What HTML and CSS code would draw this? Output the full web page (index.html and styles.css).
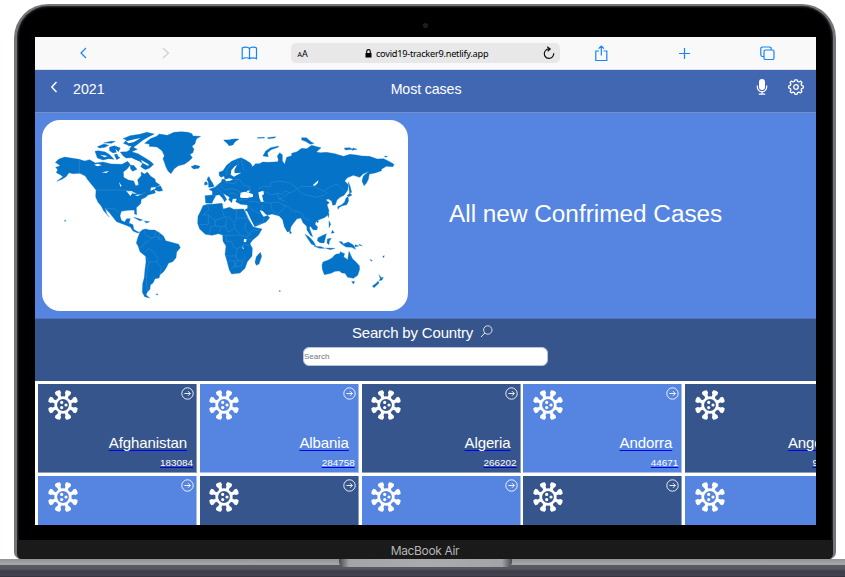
FILE: index.html
```html
<!DOCTYPE html>
<html lang="en">
<head>
<meta charset="utf-8">
<title>Covid-19 Tracker</title>
<link rel="stylesheet" href="styles.css">
</head>
<body>
<svg class="defs" width="0" height="0" aria-hidden="true">
  <defs>
    <path id="spike" d="M-1.700-7V-10.500L-3-12.300-2.700-14.800Q0-16 2.700-14.800L3-12.300 1.700-10.500V-7Z" fill="#fff"/>
    <symbol id="virus" viewBox="-16 -16 32 32">
      <circle r="7.300" fill="none" stroke="#fff" stroke-width="2.700"/>
      <use href="#spike" transform="rotate(22.5)"/><use href="#spike" transform="rotate(67.5)"/>
      <use href="#spike" transform="rotate(112.5)"/><use href="#spike" transform="rotate(157.5)"/>
      <use href="#spike" transform="rotate(202.5)"/><use href="#spike" transform="rotate(247.5)"/>
      <use href="#spike" transform="rotate(292.5)"/><use href="#spike" transform="rotate(337.5)"/>
      <g fill="#fff"><circle cx="-1.3" cy="-2.6" r="1.6"/><circle cx="-1.3" cy="2.6" r="1.6"/><circle cx="3" cy="0" r="1.6"/></g>
    </symbol>
    <symbol id="go" viewBox="0 0 13 13">
      <g fill="none" stroke="#fff" stroke-width=".9"><circle cx="6.5" cy="6.5" r="5.7"/><path d="M3.4 6.5H9.3M7 4.2 9.3 6.5 7 8.8"/></g>
    </symbol>
  </defs>
</svg>
<div class="laptop">
  <div class="lid">
    <div class="camera-row"><span class="camera"></span></div>
    <div class="screen">
      <nav class="toolbar">
        <svg class="tool" width="18" height="18" viewBox="0 0 18 18"><path d="M12 4 7 9 12 14"/></svg>
        <svg class="tool off" width="18" height="18" viewBox="0 0 18 18"><path d="M6 4 11.500 9 6 14"/></svg>
        <svg class="tool" width="18" height="18" viewBox="0 0 18 18"><path d="M9.500 4.500C8 2.800 4 2.700 2.200 4V14.800C4.500 13.600 8 13.600 9.500 14.800 11 13.600 14.500 13.600 16.500 14.800V4C14.500 2.700 11 2.800 9.500 4.500V14.500"/></svg>
        <div class="address">
          <span class="text-size"><small>A</small>A</span>
          <span class="url"><svg width="7" height="9" viewBox="0 0 7 9"><path d="M.5 4H6.500V8.500H.500Z" fill="#000"/><path d="M1.700 4V2.400A1.800 1.800 0 0 1 5.300 2.400V4" fill="none" stroke="#000" stroke-width="1.100"/></svg><span>covid19-tracker9.netlify.app</span></span>
          <svg class="reload" width="14" height="14" viewBox="0 0 14 14"><path d="M8.500 3A4.700 4.700 0 1 0 12.700 7.300M6.200 .8 9.200 3 6.600 5.400" fill="none" stroke="#111" stroke-width="1.200"/></svg>
        </div>
        <svg class="tool" width="18" height="18" viewBox="0 0 18 18"><path d="M7 7H3.800V16.500H14.800V7H11.500M9.300 11.500V2.200M6.600 4.700 9.300 2 12 4.700"/></svg>
        <svg class="tool" width="18" height="18" viewBox="0 0 18 18"><path d="M9.500 4V15M4 9.500H15"/></svg>
        <svg class="tool" width="18" height="18" viewBox="0 0 18 18"><rect x="6" y="6" width="10" height="9.500" rx="1.600"/><path d="M6 12.500H4.500A1.700 1.700 0 0 1 2.800 10.800V4.700A1.700 1.700 0 0 1 4.500 3H11.500A1.700 1.700 0 0 1 13.200 4.700V6"/></svg>
      </nav>
      <header class="header">
        <div class="left">
          <svg width="8" height="12" viewBox="0 0 8 12"><path d="M6.500 1 1.800 6 6.500 11" fill="none" stroke="#fff" stroke-width="1.500"/></svg>
          <span>2021</span>
        </div>
        <h1>Most cases</h1>
        <div class="right">
          <svg width="12" height="16" viewBox="0 0 12 16"><rect x="3" y="0" width="6" height="11" rx="3" fill="#fff"/><path d="M1.300 6.500V8A4.700 4.700 0 0 0 10.700 8V6.500M6 12.500V15M2.800 15.200H9.200" fill="none" stroke="#fff" stroke-width="1.200"/></svg>
          <svg width="16" height="16" viewBox="0 0 16 16"><path d="M6.300 2.500 7 .8H9L9.700 2.500 10.900 3 12.600 2.200 13.900 3.500 13.100 5.200 13.600 6.300 15.300 7V9L13.600 9.700 13.100 10.900 13.900 12.600 12.600 13.900 10.900 13.100 9.700 13.600 9 15.300H7L6.300 13.600 5.100 13.100 3.400 13.900 2.100 12.600 2.900 10.900 2.400 9.700.7 9V7L2.400 6.300 2.900 5.100 2.100 3.400 3.400 2.100 5.100 2.900Z" fill="none" stroke="#fff" stroke-width="1.300" stroke-linejoin="round"/><circle cx="8" cy="8" r="2.300" fill="none" stroke="#fff" stroke-width="1.300"/></svg>
        </div>
      </header>
      <section class="hero">
        <div class="map">
          <svg width="366" height="191" viewBox="22 24 1098 573">
            <g class="land">
              <path d="M62 151 73 141 90 135 133 142 150 147 165 143 182 153 205 150 230 156 262 157 279 148 287 158 278 170 266 180 267 196 281 204 297 207 303 221 312 219 309 203 320 191 319 180 330 186 338 180 348 193 361 201 363 210 376 219 362 225 349 226 346 238 359 232 362 243 340 249 333 256 320 262 318 275 305 287 306 308 300 306 299 294 280 295 260 298 256 311 260 325 270 330 276 320 287 320 283 333 295 338 297 352 309 359 315 360 309 363 295 357 287 345 270 338 246 329 235 316 225 303 211 289 218 309 224 315 207 296 199 281 190 271 183 255 184 234 172 219 158 202 152 192 136 184 115 185 103 182 94 194 82 202 66 208 85 194 77 188 65 182 69 173 63 166 77 161Z"/>
              <path d="M181 118 191 116 212 120 225 128 238 142 221 140 205 144 188 138ZM188 104 208 96 222 100 211 106 194 108ZM224 106 239 101 257 108 251 119 235 123 225 116ZM207 93 228 88 242 88 231 94ZM239 128 253 124 256 137 246 143ZM257 120 276 119 286 113 281 100 266 94 276 84 265 80 286 71 315 67 336 61 359 66 341 75 324 85 310 96 296 106 308 112 291 119 310 125 330 137 347 148 357 157 345 168 332 173 318 164 324 153 310 148 291 137 274 138 265 131ZM286 160 297 160 307 172 294 178 288 171ZM365 224 378 222 384 236 372 238 360 233ZM297 316 309 319 324 324 315 326ZM329 327 345 329 335 333ZM90 325H93V328H90Z"/>
              <path d="M330 94 347 80 366 73 374 66 398 70 418 61 440 59 460 61 472 65 475 72 498 73 485 81 481 95 472 103 478 112 474 123 466 127 473 137 462 148 449 157 431 161 418 171 409 185 400 177 394 165 389 151 385 140 389 131 382 116 367 105 343 103 345 97ZM469 164 481 159 496 163 492 169 477 171Z"/>
              <path d="M316 360 324 353 333 351 345 354 360 354 374 362 387 373 393 386 410 391 432 397 437 407 426 420 424 437 414 449 402 453 394 469 386 480 376 488 373 498 361 500 355 513 347 519 346 532 338 540 334 548 345 558 330 554 323 541 324 515 329 496 331 472 334 450 333 433 316 419 310 401 305 394 309 378ZM363 546 370 546 368 549ZM568 84 585 84 598 82 610 81 602 88 592 91 596 97 586 99 578 94ZM521 194 526 205 532 212 538 223 522 226 522 211 517 203ZM510 211 516 209 519 217 510 220Z"/>
              <g transform="translate(525)">
                <path d="M7 274-12 273-14 251 8 249 8 238-2 232 16 226 27 216 35 210 37 202 46 202 43 192 34 196 29 191 28 181 40 176 51 160 66 148 84 140 94 137 108 144 123 154 128 163 123 168 134 160 137 155 149 155 159 150 177 151 205 149 206 143 203 132 210 122 218 128 218 146 225 157 231 136 246 131 246 124 262 119 276 109 291 110 306 100 322 104 334 107 320 120 332 122 350 121 376 125 388 129 402 133 421 127 440 129 457 132 479 133 503 141 522 140 540 149 553 157 550 164 530 163 515 172 516 176 496 183 479 186 476 202 470 214 463 221 457 207 461 192 478 178 460 186 450 196 431 190 413 197 405 207 416 218 414 235 403 250 391 256 382 264 377 278 369 280 366 267 356 261 348 263 359 272 352 278 358 296 354 310 344 317 328 323 319 329 316 337 324 345 321 354 310 353 302 342 299 348 304 361 309 374 302 370 292 354 291 343 280 332 274 318 262 320 252 333 244 344 241 358 233 360 224 344 219 323 209 312 187 306 173 310 180 317 169 330 135 344 116 316 106 297 108 292 114 289 114 279 93 277 78 269 82 260 69 260 66 272 57 263 60 256 40 244 51 262 45 270 40 260 29 248 19 250 10 266Z"/>
                <path d="M-28 299-20 281-7 277 7 277 37 274 41 291 60 286 72 292 102 291 116 321 131 345 157 351 146 370 128 385 121 395 128 409 127 432 113 449 106 469 91 483 66 486 59 474 52 447 46 427 49 402 40 388 39 369 26 365 7 370-13 367-30 351-36 334-35 313Z"/>
                <path d="M152 421 156 433 148 456 140 460 136 451 140 434ZM160 132 168 117 183 107 207 102 205 106 184 113 173 123 176 134ZM276 77 290 77 305 90 313 94 302 97 287 88 276 84ZM142 77 163 76 165 78 145 79ZM173 77 198 74 195 78 176 80ZM404 108 420 107 429 112 407 114ZM430 108 442 112 427 115ZM42 85 59 84 74 81 88 82 78 87 69 99 58 101 52 93ZM525 132 534 133 526 136ZM-2 194 2 203 8 212 12 223-1 226-3 211ZM416 209 421 222 426 241 420 244 418 228ZM420 244 427 249 418 254 412 251ZM415 254 417 266 411 278 398 281 389 286 385 292 384 284 396 278 405 270 409 258ZM354 301 358 306 356 317ZM358 327 363 337 358 347ZM368 355 374 362 365 364ZM321 327 327 328 324 333ZM241 356 246 363 240 365Z"/>
                <path d="M286 367 298 374 312 389 318 402 305 396 295 381ZM313 403 334 404 345 409 330 409ZM325 377 340 370 350 365 347 379 343 393 331 392 323 386ZM353 381 365 379 359 388 358 398 352 393ZM347 408 376 409 362 413ZM388 389 397 389 401 396 416 390 431 399 438 412 426 406 409 405 397 397ZM437 398 447 402 435 405Z"/>
                <path d="M340 450 356 444 368 437 375 429 381 426 391 425 391 419 405 425 402 434 414 443 418 418 424 431 429 441 438 449 449 461 450 472 444 490 431 499 414 496 406 484 397 483 389 477 376 478 364 484 344 488 338 472 337 459ZM426 508 435 509 431 516ZM508 488 515 497 521 496 517 504 508 506 512 500ZM505 507 508 513 493 527 488 522 500 514ZM450 397 458 402 447 399ZM481 442 488 446 485 448ZM519 433 524 431 522 437ZM208 536H212V538H208Z"/>
              </g>
            </g>
            <g class="water">
              <path d="M178 158 190 155 201 160 188 163ZM201 181 223 177 215 183ZM253 210 261 222 257 224ZM274 236 290 237 301 242 307 247 293 244 287 252 280 243ZM300 250 322 246 309 252ZM281 145 298 142 318 150 313 158 293 154ZM196 128 219 132 210 136ZM252 96 267 106 290 101 286 109 265 112ZM242 110 257 126 263 140 250 133ZM318 143 342 157 341 162 324 153ZM274 88 300 82 318 78 298 90 282 94Z"/>
              <g transform="translate(525)">
                <path d="M82 158 74 164 65 175 63 188 73 194 89 185 95 182 75 184 74 174 79 165ZM46 202 59 199 70 202 61 206 49 208ZM91 256 93 242 106 239 120 243 130 247 130 254 113 258 97 258ZM110 237 122 235 116 242ZM146 241 161 236 163 247 157 250 162 269 154 270 149 258ZM309 220 326 205 325 212 316 221ZM106 296 112 298 123 321 135 345 128 339ZM150 295 159 297 168 307 174 310 162 314 156 306ZM103 381 111 382 109 391 102 389ZM98 401 103 411 99 410Z"/>
              </g>
            </g>
            <g class="borders">
              <path d="M134 143V184L154 192M184 234H268L286 240 302 244 318 249 335 240M208 288 224 290 240 290 252 302M276 331 284 336M329 355 333 371 351 378 368 373 374 385 387 375M351 378 341 388 330 391 326 403 317 407M330 420 343 410 361 425 368 437 367 449 380 466 376 486M333 433 343 450 367 449M343 450 337 475 335 510 338 539M362 360 360 373M374 362 373 384"/>
              <g transform="translate(525)">
                <path d="M145 231 161 222 183 225 183 212 207 207 239 212 263 230 250 239 239 242 226 237 218 247 202 244 187 249 164 239M263 230 275 223 310 224 345 238 354 228 383 216 402 235M263 230 275 244 292 250 320 256 345 249 355 239M163 270 183 274 205 270 220 278 237 286 247 296 277 302 281 316 301 327M183 274 187 292 202 308 220 292 228 278M205 262 220 256 238 243M202 244 208 260 225 267M160 278 155 295M117 270 134 268 149 273M112 279 123 291 150 306M137 340 159 331 163 319"/>
                <path d="M94 138 97 154 103 175M83 145 87 160M64 155 53 172 50 190M72 202 90 203 103 221 120 223 121 239M45 211 61 214 75 215 84 205M31 218 47 234 62 230 80 233 95 243M58 246 72 242 84 252M15 223 35 241M88 264 112 263 120 252M8 249 20 251"/>
                <path d="M-7 279-2 294-20 309-4 309-4 337-30 338M-4 309 16 325 30 321 45 315 59 315 71 330M40 275 37 291 44 315M81 291V322L73 335 77 351 91 367M83 318H116M16 325 17 341 2 345 0 368M17 341 35 345 47 342 51 320M35 345 29 360M47 342 54 360 73 351M39 370H72L91 369 106 374 126 368M110 331 105 351 118 366 131 353 146 356M50 374V388H65L72 406 83 410M46 432H78L83 410 98 401 108 398 126 404M78 432 84 445 96 449 109 433M57 447 75 446 75 464 65 469M84 445 75 464 94 462 99 448M128 385 111 377"/>
              </g>
            </g>
          </svg>
        </div>
        <h2>All new Confrimed Cases</h2>
      </section>
      <section class="search">
        <label for="country">Search by Country <svg width="13" height="13" viewBox="0 0 13 13"><circle cx="7.800" cy="5" r="4.200" fill="none" stroke="#fff" stroke-width=".8"/><path d="M4.800 8 1 12" stroke="#fff" stroke-width=".9"/></svg></label>
        <input id="country" type="text" placeholder="Search">
      </section>
      <main class="grid">
        <a class="card dark" href="#"><svg class="virus"><use href="#virus"/></svg><svg class="go"><use href="#go"/></svg><strong>Afghanistan</strong><em>183084</em></a>
        <a class="card" href="#"><svg class="virus"><use href="#virus"/></svg><svg class="go"><use href="#go"/></svg><strong>Albania</strong><em>284758</em></a>
        <a class="card dark" href="#"><svg class="virus"><use href="#virus"/></svg><svg class="go"><use href="#go"/></svg><strong>Algeria</strong><em>266202</em></a>
        <a class="card" href="#"><svg class="virus"><use href="#virus"/></svg><svg class="go"><use href="#go"/></svg><strong>Andorra</strong><em>44671</em></a>
        <a class="card dark" href="#"><svg class="virus"><use href="#virus"/></svg><svg class="go"><use href="#go"/></svg><strong>Angola</strong><em>99761</em></a>
        <a class="card" href="#"><svg class="virus"><use href="#virus"/></svg><svg class="go"><use href="#go"/></svg></a>
        <a class="card dark" href="#"><svg class="virus"><use href="#virus"/></svg><svg class="go"><use href="#go"/></svg></a>
        <a class="card" href="#"><svg class="virus"><use href="#virus"/></svg><svg class="go"><use href="#go"/></svg></a>
        <a class="card dark" href="#"><svg class="virus"><use href="#virus"/></svg><svg class="go"><use href="#go"/></svg></a>
        <a class="card" href="#"><svg class="virus"><use href="#virus"/></svg><svg class="go"><use href="#go"/></svg></a>
      </main>
    </div>
    <div class="chin">MacBook Air</div>
  </div>
  <div class="base"><div class="notch"></div></div>
</div>
</body>
</html>
```
FILE: styles.css
```css
* { box-sizing: border-box; }
body { margin: 0; background: #fff; font-family: "Liberation Sans", Arial, sans-serif; overflow: hidden; }
svg { display: block; flex: none; }
.defs { position: absolute; }
h1, h2 { margin: 0; font-weight: 400; }

.laptop { width: 845px; height: 577px; padding-top: 4px; display: flex; flex-direction: column; overflow: hidden; }
.lid {
  width: 822px; height: 555px; margin-left: 14px; flex: none;
  display: flex; flex-direction: column;
  background: #000; border: solid #74757a; border-width: 2px 3px 0;
  border-radius: 34px 34px 7px 7px; overflow: hidden;
  box-shadow: inset 0 0 2px 1px #34353a;
}
.camera-row { height: 31px; flex: none; display: flex; justify-content: center; padding-top: 17px; }
.camera { width: 5px; height: 5px; border-radius: 50%; background: #1b1b1d; border: 1px solid #252527; }
.screen { width: 781px; height: 488px; margin-left: 18px; flex: none; background: #fff; overflow: hidden; }

.toolbar {
  height: 33px; padding-left: 6.5px; background: #f9f9f9; border-bottom: 1px solid #dfe2e8;
  display: grid; grid-template-columns: 83px 83px 83px 269px 83px 83px 83px; align-items: center; justify-items: center;
}
.tool { fill: none; stroke: #1683ff; stroke-width: 1.2; }
.tool.off { stroke: #cfcfcf; }
.address {
  width: 269px; height: 20px; border-radius: 5px; background: #e8e8e8; color: #000;
  display: flex; align-items: center; justify-content: space-between; padding: 0 4px 0 7px;
  font: 9.2px "Noto Sans", "Open Sans", sans-serif;
}
.text-size { font-size: 9px; }
.text-size small { font-size: 7px; }
.url { display: flex; align-items: center; gap: 4px; margin-left: 4px; letter-spacing: -.25px; }

.header {
  height: 43px; padding: 0 12px 5px 15px; background: #4267b2; border-bottom: 1px solid #7592c9; color: #fff;
  display: grid; grid-template-columns: 1fr auto 1fr; align-items: center; font-size: 14.200px;
}
.header h1 { font-size: 14.200px; letter-spacing: -.1px; margin-right: 2px; }
.left { display: flex; align-items: center; gap: 15px; }
.left svg { margin-bottom: 4px; }
.right { display: flex; align-items: center; justify-content: flex-end; gap: 20px; padding-bottom: 4px; }

.hero { height: 206px; padding: 7px; background: #5585e0; border-bottom: 1px solid #5175bb; display: flex; }
.map { width: 366px; height: 191px; border-radius: 18px; background: #fff; overflow: hidden; }
.hero h2 { flex: 1; padding: 80px 0 0 41px; color: #fff; font-size: 24.350px; line-height: 28px; white-space: nowrap; }
.land { fill: #0473c8; stroke: #0473c8; stroke-width: 1; stroke-linejoin: round; }
.water { fill: #fff; }
.borders { fill: none; stroke: #4b9bd8; stroke-width: 1.2; }

.search {
  height: 62px; padding-top: 5px; background: #36558c; color: #fff;
  display: flex; flex-direction: column; align-items: center;
}
.search label { display: flex; gap: 7px; font-size: 15px; letter-spacing: -.18px; line-height: 18px; padding-right: 6px; }
.search label svg { margin-top: 1px; }
.search input {
  width: 245px; height: 19px; margin: 5px 0 0; padding: 0; border: 1px solid #b6c3da; border-radius: 6px;
  background: #fff; font: 8px "Liberation Sans", Arial, sans-serif;
}
.search input::placeholder { color: #757575; }

.grid {
  padding: 3px; display: grid; width: 815px;
  grid-template-columns: repeat(5, 159px); grid-auto-rows: 89px; gap: 2.6px 2.75px;
}
.card {
  display: grid; grid-template-columns: 1fr auto; grid-template-rows: 47px 24px 16px;
  background: #5585e0; border: solid #a9bee8; border-width: 0 1px 1px 0; color: #00e; text-decoration: none;
}
.card.dark { background: #36558c; border-color: #8b9dbf; }
.virus { width: 32px; height: 32px; margin: 5px 0 0 8.5px; }
.go { width: 13px; height: 13px; margin: 3px 2px 0 0; }
.card strong, .card em {
  grid-column: 1 / 3; justify-self: end; color: #fff; font-style: normal; font-weight: 400;
  text-decoration: underline #00e; text-decoration-skip-ink: none;
}
.card strong { font-size: 15px; letter-spacing: -.1px; line-height: 24px; margin-right: 9px; text-decoration-thickness: 1px; text-underline-offset: 2px; }
.card em { font-size: 9.900px; line-height: 16px; margin-right: 3px; text-decoration-thickness: 1px; }

.chin {
  height: 20px; flex: none; margin: 15px 0 0; border-radius: 0 0 6px 6px; background: #1a1a1a; color: #b5b5b8;
  display: flex; align-items: center; justify-content: center; font: 12px Inter, sans-serif; letter-spacing: -.35px;
}
.base {
  height: 18px; flex: none; display: flex; justify-content: center;
  background: linear-gradient(#929397 0, #a5a6aa 5px, #a0a1a5 6px, #595a60 6px, #56575e 10px, #3c3d48 12px, #42434e 17px, #252530 18px);
}
.notch {
  width: 173px; height: 8px; margin-left: 5px; border-radius: 0 0 5px 5px;
  background: linear-gradient(90deg, #4a4b50, #a3a4a8 10px, #aaabaf 50%, #a3a4a8 163px, #4a4b50);
}
```
